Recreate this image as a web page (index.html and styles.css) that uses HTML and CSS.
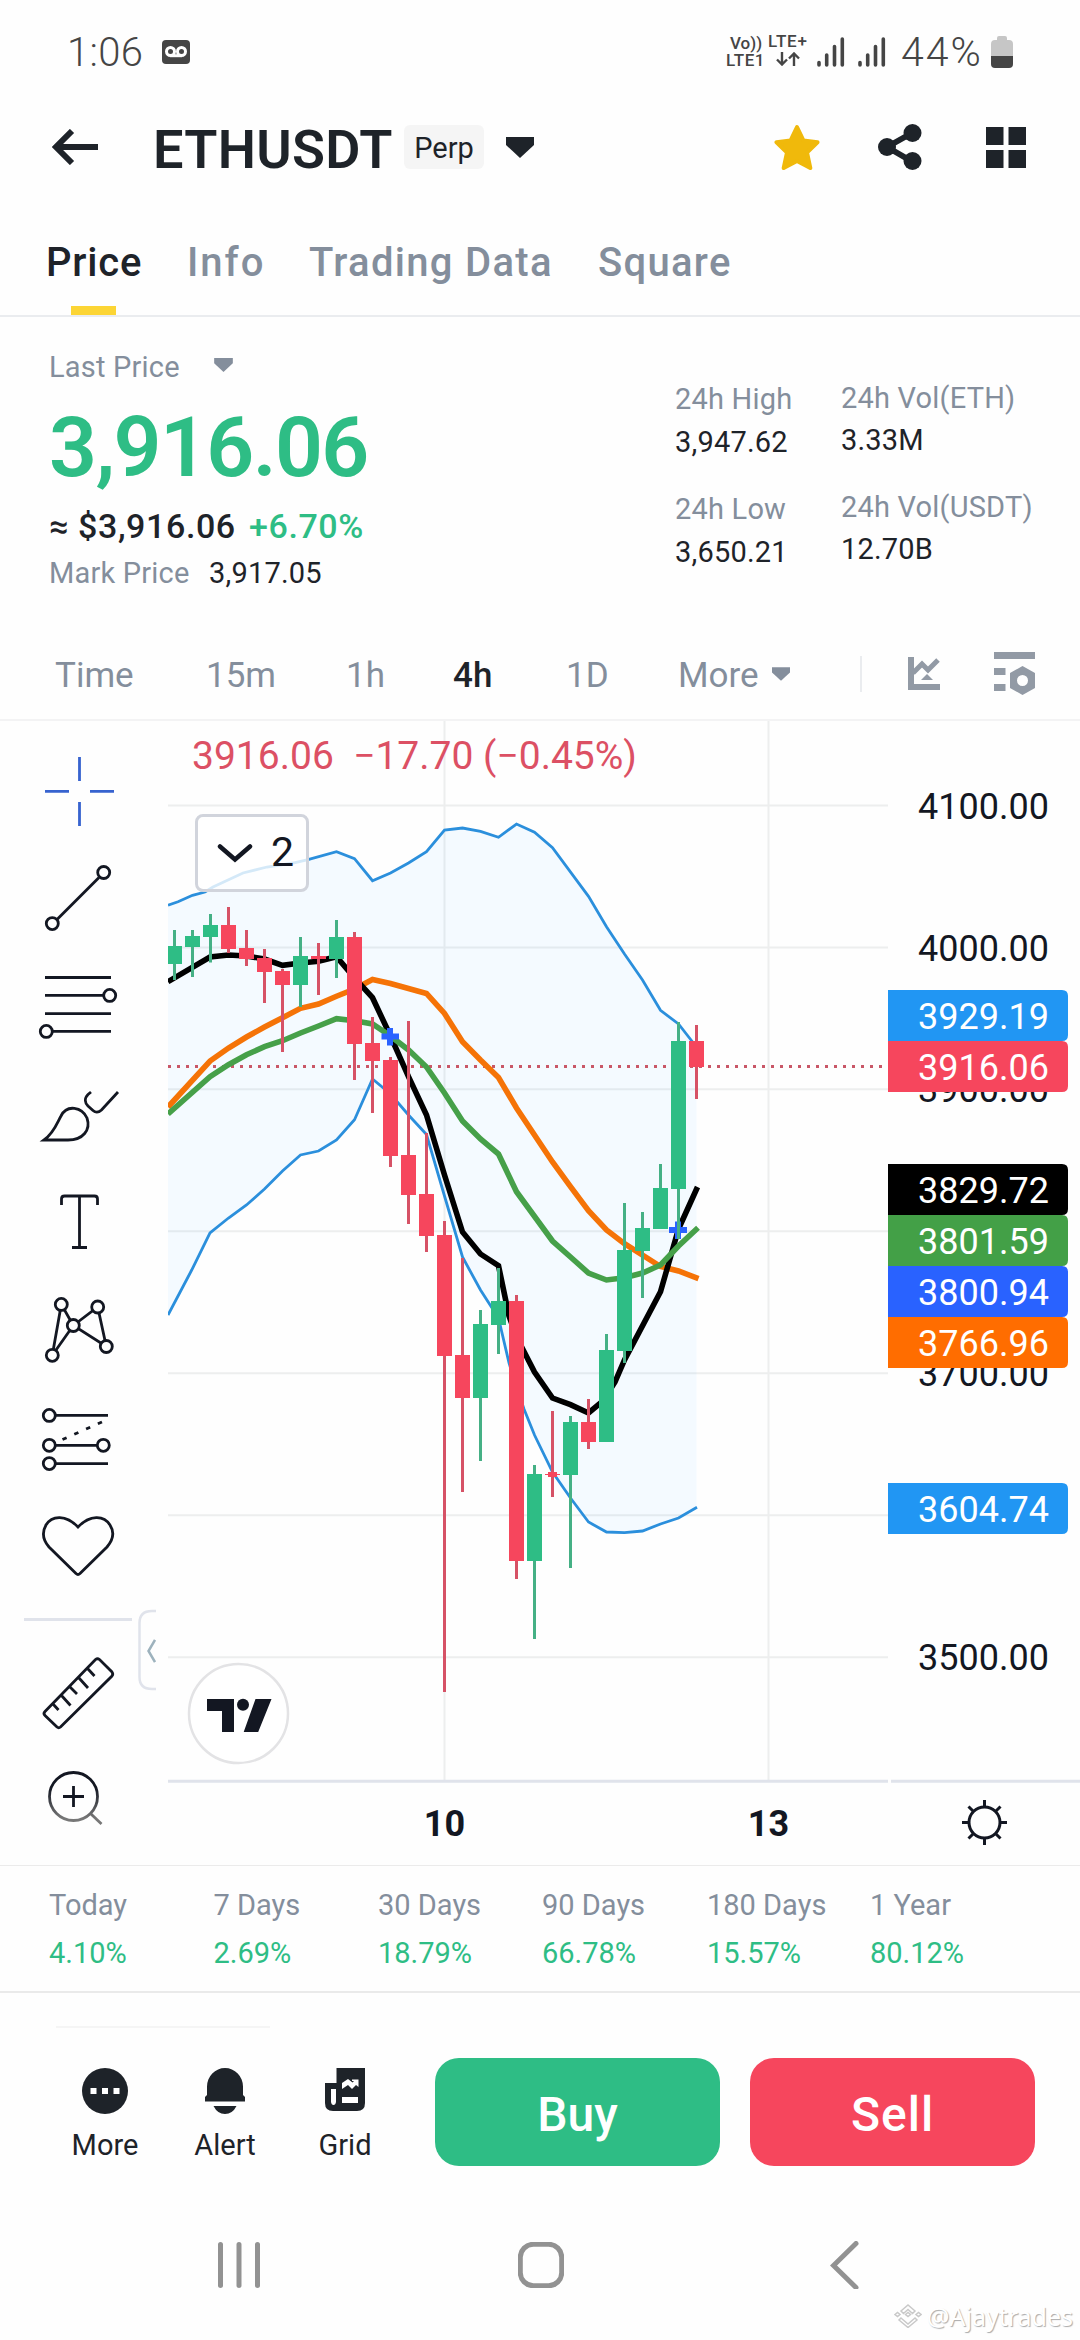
FILE: index.html
```html
<!DOCTYPE html>
<html lang="en">
<head>
    <meta charset="UTF-8">
    <meta name="viewport" content="width=device-width, initial-scale=1.0">
    <title>ETHUSDT Perp</title>
    <link rel="stylesheet" href="styles.css">
</head>
<body>
    <div class="status-bar">
        <span class="clock">1:06</span>
        <svg class="voicemail" width="28" height="24" viewBox="0 0 28 24">
            <rect width="28" height="24" rx="4" fill="#454545"/>
            <g fill="none" stroke="#fff" stroke-width="3">
                <circle cx="8.5" cy="11.5" r="4"/>
                <circle cx="19.5" cy="11.5" r="4"/>
                <path d="M8 15.7h12"/>
            </g>
        </svg>
        <div class="net volte"><span>Vo))</span><span>LTE1</span></div>
        <div class="net lte"><span>LTE+</span>
            <svg width="24" height="14" viewBox="0 0 24 14" fill="none" stroke="#454545" stroke-width="2.4">
                <path d="M6 0v12.5M1 7.5l5 5 5-5M18 14V1.5M13 6.500l5-5 5 5"/>
            </svg>
        </div>
        <svg class="signal" width="28" height="30" viewBox="0 0 28 30" stroke="#454545" stroke-width="3.600" stroke-linecap="round">
            <path d="M2 25.500v2.500M9.700 18v10M17.500 9.500v18.500M25.300 2v26"/>
        </svg>
        <svg class="signal second" width="28" height="30" viewBox="0 0 28 30" stroke="#454545" stroke-width="3.600" stroke-linecap="round">
            <path d="M2 25.500v2.500M9.700 18v10M17.500 9.500v18.500M25.300 2v26"/>
        </svg>
        <span class="battery-level">44%</span>
        <svg class="battery" width="22" height="32" viewBox="0 0 22 32">
            <path d="M6 2q0-2 2-2h6q2 0 2 2v2h2q4 0 4 4v13H0V8q0-4 4-4h2z" fill="#c6c6c6"/>
            <path d="M0 20h22v8q0 4-4 4H4q-4 0-4-4z" fill="#454545"/>
        </svg>
    </div>

    <div class="header">
        <svg class="back" width="46" height="36" viewBox="0 0 46 36" fill="none" stroke="#1e2329" stroke-width="6">
            <path d="M46 18H5M20 2L4 18l16 16"/>
        </svg>
        <h1>ETHUSDT</h1>
        <span class="badge">Perp</span>
        <svg class="caret" width="28" height="21" viewBox="0 0 28 21" fill="#1e2329"><path d="M0 0h28v8L14 21 0 8z"/></svg>
        <svg class="star" width="46" height="46" viewBox="0 0 46 46" fill="#f0b90b" stroke="#f0b90b" stroke-width="4" stroke-linejoin="round">
            <path d="M23 3l6.500 13.500 14 1.700-10.500 10.300 3.300 15.500L23 37 9.700 44 13 28.500 2.500 18.200l14-1.700z"/>
        </svg>
        <svg class="share" width="44" height="46" viewBox="0 0 44 46" fill="#1e2329">
            <path d="M9 23L34 9M9 23l25 14.500" stroke="#1e2329" stroke-width="6"/>
            <circle cx="9" cy="23" r="9"/><circle cx="34.500" cy="9" r="9"/><circle cx="34.500" cy="37" r="9"/>
        </svg>
        <svg class="widgets" width="40" height="41" viewBox="0 0 40 41" fill="#1e2329">
            <path d="M0 0h17.500v18H0zM22.500 0H40v18H22.500zM0 23h17.500v18H0zM22.500 23H40v18H22.500z"/>
        </svg>
    </div>

    <div class="tabs">
        <span class="tab active">Price</span>
        <span class="tab info">Info</span>
        <span class="tab trading">Trading Data</span>
        <span class="tab square">Square</span>
    </div>

    <div class="ticker">
        <div class="price">
            <div class="label">Last Price <svg width="19" height="14" viewBox="0 0 28 21" fill="#848e9c"><path d="M0 0h28v8L14 21 0 8z"/></svg></div>
            <div class="last">3,916.06</div>
            <div class="fiat"><span class="usd">≈ $3,916.06</span><span class="change">+6.70%</span></div>
            <div class="mark"><span class="label">Mark Price</span><span class="value">3,917.05</span></div>
        </div>
        <div class="day">
            <div class="label">24h High</div>
            <div class="value">3,947.62</div>
            <div class="label low">24h Low</div>
            <div class="value">3,650.21</div>
        </div>
        <div class="day volume">
            <div class="label">24h Vol(ETH)</div>
            <div class="value">3.33M</div>
            <div class="label low">24h Vol(USDT)</div>
            <div class="value">12.70B</div>
        </div>
    </div>

    <div class="intervals">
        <span>Time</span>
        <span>15m</span>
        <span>1h</span>
        <span class="active">4h</span>
        <span>1D</span>
        <span class="more">More</span>
        <svg width="18" height="14" viewBox="0 0 28 21" fill="#848e9c"><path d="M0 0h28v8L14 21 0 8z"/></svg>
        <i class="divider"></i>
        <svg width="32" height="33" viewBox="0 0 32 33" fill="#929aa5">
            <path d="M0 0h6v27h26v6H0z"/>
            <path d="M5 16l9-9 6 6L30 3" fill="none" stroke="#929aa5" stroke-width="5"/>
            <path d="M13 23l6-6 6 6z"/>
        </svg>
        <svg width="41" height="43" viewBox="0 0 41 43" fill="#929aa5">
            <path d="M0 0h41v7H0zM0 16h11.500v7H0zM0 32h11.500v7H0z"/>
            <path d="M28.500 14L41 21v15l-12.500 7L16 36V21zm0 9a5.500 5.500 0 1 0 0 11 5.500 5.500 0 0 0 0-11z" fill-rule="evenodd"/>
        </svg>
    </div>

    <div class="chart">
        <div class="toolbar">
            <svg class="tool crosshair"><path d="M45 51.400h24M90 51.400h24M79.500 17v24M79.500 62v24"/></svg>
            <svg class="tool"><path d="M57 71.500L99 29.500"/><circle cx="52.300" cy="75.600" r="6"/><circle cx="103.700" cy="24.500" r="6"/></svg>
            <svg class="tool"><path d="M45 21.500h66M45 39.400h58M45 57.600h66M53 75.400h58"/><circle cx="109.700" cy="39.400" r="6"/><circle cx="46.300" cy="75.400" r="6"/></svg>
            <svg class="tool"><path d="M44 76C54 69 57 59 61 52C67 40 82 43 87 54C91 66 83 76 68 76zM91 28L88 30.500C84 34.500 85 39 88 42L93 46.500Q97 50 101.500 46L118 28"/></svg>
            <svg class="tool"><path d="M61.500 33v-6q0-3 3-3h30q3 0 3 3v6M79.500 24v51.500M72 75.500h15"/></svg>
            <svg class="tool"><path d="M61.300 24.400L52.300 75.300 73.300 45.500zM73.300 45.500L97.700 27l8.600 39.500z"/><circle cx="61.300" cy="24.400" r="6"/><circle cx="97.700" cy="27" r="6"/><circle cx="73.300" cy="45.500" r="6"/><circle cx="52.300" cy="75.300" r="6"/><circle cx="106.300" cy="66.500" r="6"/></svg>
            <svg class="tool"><path d="M56 27.400h52M56 57.300h41M56 75.600h52"/><path d="M62.500 51.500L103 33.500" stroke-dasharray="4.500 8.400"/><circle cx="49.300" cy="27.400" r="6"/><circle cx="49.300" cy="57.300" r="6"/><circle cx="103.300" cy="57.300" r="6"/><circle cx="49.300" cy="75.600" r="6"/></svg>
            <svg class="tool"><path d="M78 31C66 18.500 52 19 46 29C42 36 43 44 49 51L76 77.500Q78 79.500 80 77.500L107 51C113 44 114.500 36 110 29C104 19 90 18.500 78 31z"/></svg>
            <hr>
            <svg class="tool"><path d="M45 71.400L95.500 19.500Q97.500 18 99.500 19.500L112 32Q113.500 34 112 36L60.500 87Q58.700 88.500 57 87L45 75.400Q43 73.400 45 71.400zM53 64l5.500 6M61.500 55.500l9 10M70 47l7 7M79 38l9 10M88 29l6.500 7"/></svg>
            <svg class="tool zoom-in">
                <defs><linearGradient id="fade" gradientUnits="userSpaceOnUse" x1="0" y1="40" x2="0" y2="78"><stop offset="0" stop-color="#131722"/><stop offset=".8" stop-color="#777"/></linearGradient></defs>
                <g stroke="url(#fade)"><circle cx="73.500" cy="48.500" r="24"/><path d="M91 66l10.500 10"/></g>
                <path d="M63 48.500h21M73.500 38v21"/>
            </svg>
        </div>
        <svg class="collapse" width="20" height="84" viewBox="0 0 20 84" fill="none">
            <path d="M20 2h-4Q3.500 2 3.500 14v54q0 12 12.500 12h4" stroke="#e0e3eb" stroke-width="2.500"/>
            <path d="M19 31l-6.500 11 6.500 11" stroke="#9db2bd" stroke-width="2.500"/>
        </svg>

        <svg class="plot" width="912" height="1144" viewBox="168 721 912 1144">
            <!-- bollinger fill -->
            <path fill="#f4faff" d="M168 905.300L178 901.700 192.500 895.300 205 892 213 887 243 873 267 867 293 863 308 859.700 336.500 851.700 354.500 858.700 372.500 880.700 390.500 873 408.500 863 426.500 851.700 444.500 830 462.500 828 480.500 831.300 498.500 837.300 516.500 824 534.500 832.300 552.500 847.700 588.500 896.300 606.500 926.700 624.500 954 642.500 980 660.500 1010.300 678.500 1024 696.500 1047V1507L678.500 1518 660.500 1524 642.500 1531 624.500 1532.700 606.500 1532 588.500 1522 570.500 1498 552.500 1472 534.500 1435 524 1409 516.500 1387 509 1363 498.500 1318 480.500 1290 462.500 1257 444.500 1196 426.500 1134.500 408.500 1115 390.500 1094 372.500 1079 354.500 1119.700 336.500 1140 318.500 1151 300.500 1155 282.500 1171 264.500 1189 246.500 1205 228.500 1218 210 1233 191.700 1270 168 1315z"/>
            <!-- grid -->
            <path stroke="#2a2e39" stroke-opacity=".08" stroke-width="2" d="M168 805.500h720M168 947.500h720M168 1089.300h720M168 1231.300h720M168 1373.300h720M168 1515.300h720M168 1657.300h720M444.500 721v1060M768.500 721v1060"/>
            <path stroke="#e0e3eb" stroke-width="3" d="M168 1781.300h720M891 1781.300h189"/>
            <path stroke="#c95767" stroke-width="3" stroke-dasharray="3 6" d="M168 1066.500h720"/>
            <!-- bands -->
            <g fill="none" stroke="#2b8fdc" stroke-width="2.800">
                <path d="M168 905.300L178 901.700 192.500 895.300 205 892 213 887 243 873 267 867 293 863 308 859.700 336.500 851.700 354.500 858.700 372.500 880.700 390.500 873 408.500 863 426.500 851.700 444.500 830 462.500 828 480.500 831.300 498.500 837.300 516.500 824 534.500 832.300 552.500 847.700 588.500 896.300 606.500 926.700 624.500 954 642.500 980 660.500 1010.300 678.500 1024 696.500 1047"/>
                <path d="M168 1315L191.700 1270 210 1233 228.500 1218 246.500 1205 264.500 1189 282.500 1171 300.500 1155 318.500 1151 336.500 1140 354.500 1119.700 372.500 1079 390.500 1094 408.500 1115 426.500 1134.500 444.500 1196 462.500 1257 480.500 1290 498.500 1318 509 1363 516.500 1387 524 1409 534.500 1435 552.500 1472 570.500 1498 588.500 1522 606.500 1532 624.500 1532.700 642.500 1531 660.500 1524 678.500 1518 697 1507.300"/>
            </g>
            <!-- moving averages -->
            <g fill="none" stroke-width="5.600">
                <path stroke="#f57307" d="M168 1107L210 1061 228.500 1048 246.500 1037 264.500 1027 282.500 1017.700 300.500 1008.300 318.500 1004 336.500 996.300 354.500 989 372.500 979.500 390.500 983.500 426.500 993.500 444.500 1013.500 462.500 1041.700 480.500 1060 498.500 1077.500 516.500 1108 534.500 1135 552.500 1162 570.500 1186.700 588.500 1210.700 606.500 1230 624.500 1243.700 660.500 1266.500 678.500 1271 698.500 1278.600"/>
                <path stroke="#000" d="M168 981.700L210 957 228.500 955 246.500 956 264.500 959 282.500 965.300 300.500 963 318.500 961.300 336.500 956.700 354.500 978 372.500 997.700 390.500 1036 408.500 1076.700 426.500 1115 444.500 1175 462.500 1232 480.500 1254 498.500 1265.700 509 1316 516.500 1337 534.500 1372 552.500 1398 570.500 1404.700 588.500 1413 603 1401 615 1382 624.500 1360 660.500 1291.700 678.500 1229 697.500 1187"/>
                <path stroke="#46a049" d="M168 1114L210 1076.700 228.500 1064.700 246.500 1054.700 264.500 1046.700 282.500 1040.700 300.500 1033 318.500 1026 336.500 1018.700 354.500 1020.700 372.500 1024 390.500 1036 408.500 1050 426.500 1067 444.500 1093 462.500 1121 480.500 1139 498.500 1154 516.500 1191.700 552.500 1241 570.500 1257 588.500 1273 606.500 1280 624.500 1277.700 642.500 1273 660.500 1265 678.500 1246 698 1227.700"/>
            </g>
            <path stroke="#2962ff" stroke-width="6" d="M381.500 1036.500h17.500M390 1028v17.500M669 1230h18M678 1221.500v17.500"/>
            <!-- candle wicks -->
            <g stroke-width="3">
                <path stroke="#45b085" d="M174.500 930V980M192.500 930V977M210.500 914V962.500M300.500 937V1007M336.500 920V978M480.500 1310V1461M498.500 1268V1354M534.500 1465V1639M570.500 1416V1568M606.500 1334V1400M624.500 1203V1363M642.500 1212V1298M660.500 1164V1229M678.500 1022V1239"/>
                <path stroke="#d65266" d="M228.500 907V953M246.500 930V966M264.500 949V1003M282.500 969V1052M318.500 943V995M354.500 932V1080M372.500 1017V1113M390.500 1057V1167M408.500 1021V1224M426.500 1133V1252M444.500 1221V1692M462.500 1258V1492M516.500 1295V1579M552.500 1411V1497M588.500 1399V1449M696.500 1025V1099"/>
            </g>
            <!-- candle bodies -->
            <g stroke-width="15">
                <path stroke="#2ebd85" d="M174.500 946V964M192.500 936V947M210.500 925V937M300.500 956V985M336.500 937V959M480.500 1324V1398M498.500 1301V1325M534.500 1474V1561M570.500 1422V1475M606.500 1350V1442M624.500 1250V1351M642.500 1228V1251M660.500 1188V1229M678.500 1041V1189"/>
                <path stroke="#f6465d" d="M228.500 925V949M246.500 948V959M264.500 958V972M282.500 971V985M318.500 956V959M354.500 937V1044M372.500 1043V1061M390.500 1060V1156M408.500 1155V1195M426.500 1194V1236M444.500 1235V1356M462.500 1355V1398M516.500 1301V1561M552.500 1474V1475M588.500 1422V1442M696.500 1041V1067"/>
                <path stroke="#f6465d" stroke-width="9" d="M552.500 1472V1477"/>
            </g>
            <!-- price scale -->
            <g class="scale">
                <text x="918" y="819">4100.00</text>
                <text x="918" y="961">4000.00</text>
                <text x="918" y="1102">3900.00</text>
                <text x="918" y="1386">3700.00</text>
                <text x="918" y="1670">3500.00</text>
            </g>
            <g class="scale tags">
                <path fill="#2196f3" d="M888 990h174q6 0 6 6v39q0 6-6 6H888z"/><text x="918" y="1028.500">3929.19</text>
                <path fill="#f6465d" d="M888 1041h174q6 0 6 6v39q0 6-6 6H888z"/><text x="918" y="1079.500">3916.06</text>
                <path fill="#000" d="M888 1164h174q6 0 6 6v39q0 6-6 6H888z"/><text x="918" y="1202.500">3829.72</text>
                <path fill="#43a047" d="M888 1215h174q6 0 6 6v39q0 6-6 6H888z"/><text x="918" y="1253.500">3801.59</text>
                <path fill="#2962ff" d="M888 1266h174q6 0 6 6v39q0 6-6 6H888z"/><text x="918" y="1304.500">3800.94</text>
                <path fill="#ff6d00" d="M888 1317h174q6 0 6 6v39q0 6-6 6H888z"/><text x="918" y="1355.500">3766.96</text>
                <path fill="#2196f3" d="M888 1483h174q6 0 6 6v39q0 6-6 6H888z"/><text x="918" y="1521.500">3604.74</text>
            </g>
            <!-- time scale -->
            <g class="scale dates">
                <text x="444.500" y="1836">10</text>
                <text x="768.500" y="1836">13</text>
            </g>
            <g fill="none" stroke="#131722" stroke-width="3" transform="translate(984.500 1822.500)">
                <circle r="15.500"/>
                <path d="M0-16v-6.500M0 16v6.500M-16 0h-6.500M16 0h6.500M-11-11l-5-5M11-11l5-5M-11 11l-5 5M11 11l5 5"/>
            </g>
            <!-- tradingview mark -->
            <circle cx="238.500" cy="1713.500" r="49.500" fill="#fff" stroke="#e3e3e5" stroke-width="2.500"/>
            <path fill="#131722" d="M207 1699h27v33h-12v-21h-15zM255.500 1699h16l-13.300 33h-14.500z"/>
            <circle cx="243" cy="1704.800" r="6" fill="#131722"/>
        </svg>

        <div class="legend">3916.06 &nbsp;−17.70 (−0.45%)</div>
        <div class="toggle">
            <svg width="36" height="20" viewBox="0 0 36 20" fill="none" stroke="#131722" stroke-width="4.500" stroke-linecap="round"><path d="M3 3.500l15 13 15-13"/></svg>
            <span>2</span>
        </div>
    </div>

    <div class="periods">
        <div><span>Today</span><b>4.10%</b></div>
        <div><span>7 Days</span><b>2.69%</b></div>
        <div><span>30 Days</span><b>18.79%</b></div>
        <div><span>90 Days</span><b>66.78%</b></div>
        <div><span>180 Days</span><b>15.57%</b></div>
        <div><span>1 Year</span><b>80.12%</b></div>
    </div>

    <hr class="hairline">

    <div class="actions">
        <div class="action">
            <svg width="46" height="46" viewBox="0 0 46 46"><circle cx="23" cy="23" r="23" fill="#1e2329"/><path fill="#fff" d="M8.500 20h6v6h-6zM20 20h6v6h-6zM31.500 20h6v6h-6z"/></svg>
            <span>More</span>
        </div>
        <div class="action">
            <svg width="46" height="46" viewBox="0 0 46 46" fill="#1e2329"><path d="M5 18.500a18 18.500 0 0 1 36 0V27l2 2v4.500H3V29l2-2zM11.500 38h23q-4 8-11.500 8t-11.500-8z"/></svg>
            <span>Alert</span>
        </div>
        <div class="action">
            <svg width="46" height="46" viewBox="0 0 46 46"><path fill="#1e2329" d="M14.500 0H43v35q0 8-8 8H11q-8 0-8-8V15h11.500z"/><path fill="#fff" d="M9 21h5v13q-.5 3-2.500 3T9 34zM20 29h16v6H20zM20 21v-6l6-4 4.500 3.500L32 13h-2v-1.500h6.500V19L34 17l-4 4-4-4z"/></svg>
            <span>Grid</span>
        </div>
        <button class="buy">Buy</button>
        <button class="sell">Sell</button>
    </div>

    <div class="nav">
        <svg width="44" height="46" viewBox="0 0 44 46"><path d="M3.500 2.500v41M22 2.500v41M40.500 2.500v41"/></svg>
        <svg width="46" height="46" viewBox="0 0 46 46"><rect x="2.300" y="2.300" width="41.400" height="41.400" rx="13"/></svg>
        <svg width="30" height="48" viewBox="0 0 30 48"><path d="M26 2.500L3.500 24.500 26 46.500"/></svg>
        <div class="watermark">
            <svg width="28" height="24" viewBox="0 0 28 24" fill="none" stroke="#c9c9c9" stroke-width="1.500"><path d="M7 7l7-6 7 6-2.500 2.500-4.500-4-4.500 4zM1 10.500l2.500-2 2.500 2-2.500 2zM22 10.500l2.500-2 2.500 2-2.500 2zM11.500 10.500l2.500-2 2.500 2-2.500 2zM7 14l7 6 7-6 2 2-9 7.500L5 16z"/></svg>
            <span>@Ajaytrades</span>
        </div>
    </div>
</body>
</html>
```
FILE: styles.css
```css
* {
    box-sizing: border-box;
}
body {
    margin: 0;
    width: 1080px;
    height: 2340px;
    overflow: hidden;
    background: #fefefe;
    color: #1e2329;
    font-family: Roboto, "Noto Sans", sans-serif;
    display: flex;
    flex-direction: column;
}
svg {
    display: block;
    flex: none;
}

/* status bar */
.status-bar {
    display: flex;
    align-items: center;
    height: 104px;
    padding: 0 67px 0 67px;
    color: #454545;
}
.clock {
    width: 95px;
    font-size: 40px;
    font-weight: 300;
    letter-spacing: 0.3px;
}
.net {
    display: flex;
    flex-direction: column;
    font-size: 17px;
    font-weight: 500;
    line-height: 17px;
    height: 34px;
    white-space: nowrap;
}
.volte {
    margin-left: auto;
    width: 42px;
}
.volte span:first-child {
    padding-left: 4px;
}
.volte span:last-child {
    letter-spacing: 0.6px;
}
.lte {
    width: 49px;
    margin-top: -4px;
    letter-spacing: 0.8px;
}
.lte svg {
    margin: 2px 0 0 8px;
}
.second {
    margin-left: 13px;
}
.battery-level {
    margin-left: 15px;
    width: 90px;
    font-size: 41px;
    font-weight: 300;
    letter-spacing: 2px;
    white-space: nowrap;
}

/* header */
.header {
    display: flex;
    align-items: center;
    height: 86px;
    padding-left: 52px;
}
.header h1 {
    margin: 4px 0 0 55px;
    width: 251px;
    font-size: 54px;
    font-weight: 600;
    letter-spacing: 0.3px;
}
.badge {
    width: 80px;
    height: 44px;
    line-height: 46px;
    border-radius: 6px;
    background: #f5f5f5;
    font-size: 29px;
    text-align: center;
}
.caret {
    margin-left: 22px;
}
.star {
    margin-left: 240px;
}
.share {
    margin-left: 58px;
}
.widgets {
    margin-left: 64px;
}

/* tabs */
.tabs {
    display: grid;
    grid-template-columns: 141px 122px 289px auto;
    height: 127px;
    padding-left: 46px;
    border-bottom: 2px solid #eaecef;
    line-height: 145px;
    font-size: 40px;
    font-weight: 500;
    letter-spacing: 1.3px;
    color: #848e9c;
}
.tab.active {
    position: relative;
    letter-spacing: 0.8px;
    color: #1e2329;
}
.tab.active::after {
    content: "";
    position: absolute;
    left: 25px;
    top: 116px;
    width: 45px;
    height: 9px;
    background: #fcd535;
}
.tab.info {
    letter-spacing: 2px;
}

/* ticker */
.ticker {
    display: grid;
    grid-template-columns: 626px 166px auto;
    height: 303px;
    padding-left: 49px;
    font-size: 29px;
    line-height: 34px;
    letter-spacing: 0.2px;
}
.label {
    color: #848e9c;
}
.price {
    padding-top: 33px;
}
.price > .label {
    display: flex;
    gap: 34px;
    height: 34px;
}
.price > .label svg {
    margin-top: 8px;
}
.last {
    height: 96px;
    margin-top: 16px;
    line-height: 96px;
    font-size: 84px;
    font-weight: 600;
    letter-spacing: -1.6px;
    color: #2ebd85;
}
.fiat {
    display: flex;
    height: 42px;
    margin-top: 9px;
    line-height: 42px;
    font-size: 34px;
    font-weight: 500;
    letter-spacing: 0.6px;
}
.usd {
    width: 200px;
}
.change {
    color: #2ebd85;
}
.mark {
    display: flex;
    margin-top: 9px;
}
.mark .label {
    width: 160px;
}
.day {
    padding-top: 65px;
}
.day .value {
    margin-top: 9px;
}
.volume {
    padding-top: 64px;
}
.volume .value {
    margin-top: 8px;
}
.low {
    margin-top: 33px;
}

/* intervals */
.intervals {
    display: grid;
    grid-template-columns: 151px 140px 107px 113px 112px 94px 88px 48px 86px auto;
    align-items: center;
    height: 99px;
    padding: 8px 0 0 55px;
    font-size: 35px;
    color: #848e9c;
}
.intervals span {
    padding-top: 4px;
}
.intervals .active {
    color: #1e2329;
    font-weight: 500;
}
.divider {
    width: 2px;
    height: 36px;
    background: #eaecef;
}

/* chart */
.chart {
    position: relative;
    display: flex;
    height: 1147px;
    border-top: 2px solid #f3f3f4;
    border-bottom: 1px solid #ebebeb;
}
.toolbar {
    width: 168px;
    padding-top: 19px;
}
.tool {
    width: 168px;
    height: 108px;
    fill: none;
    stroke: #131722;
    stroke-width: 2.8px;
}
.tool circle {
    fill: #fefefe;
}
.crosshair {
    stroke: #3763cf;
}
.toolbar hr {
    width: 108px;
    height: 3px;
    margin: 14px 0 19px 24px;
    border: 0;
    background: #e0e3eb;
}
.collapse {
    position: absolute;
    left: 136px;
    top: 888px;
}
.scale text {
    font-size: 36px;
    fill: #131722;
}
.scale.tags text {
    fill: #fff;
}
.scale.dates text {
    font-weight: 700;
    text-anchor: middle;
}
.legend {
    position: absolute;
    left: 192px;
    top: 12px;
    font-size: 39px;
    line-height: 46px;
    color: #dc5064;
}
.toggle {
    position: absolute;
    left: 195px;
    top: 93px;
    display: flex;
    align-items: center;
    gap: 18px;
    width: 114px;
    height: 78px;
    padding-left: 19px;
    border: 3px solid #d1d4dc;
    border-radius: 8px;
    background: rgba(255, 255, 255, 0.8);
    font-size: 41px;
    line-height: 70px;
    color: #131722;
}
.toggle span {
    padding-bottom: 3px;
}

/* performance */
.periods {
    display: grid;
    grid-template-columns: 164.500px 164.500px 164px 165px 163px auto;
    height: 127px;
    padding: 21px 0 0 49px;
    border-bottom: 2px solid #eaeaea;
    font-size: 29px;
    color: #848e9c;
}
.periods span {
    display: block;
    height: 48px;
    line-height: 36px;
}
.periods b {
    display: block;
    line-height: 36px;
    font-weight: 400;
    color: #2ebd85;
}
.hairline {
    width: 214px;
    height: 2px;
    margin: 33px 0 0 56px;
    border: 0;
    background: #f5f5f5;
}

/* bottom actions */
.actions {
    display: flex;
    align-items: flex-start;
    height: 138px;
    padding: 30px 0 0 45px;
}
.action {
    display: flex;
    flex-direction: column;
    align-items: center;
    gap: 14px;
    width: 120px;
    padding-top: 10px;
    font-size: 29px;
}
.actions button {
    width: 285px;
    height: 108px;
    padding: 5px 0 0;
    border: 0;
    border-radius: 24px;
    color: #fff;
    font-family: inherit;
    font-size: 48px;
    font-weight: 500;
}
.buy {
    margin: 0 30px;
    background: #2ebd85;
}
.sell {
    background: #f6465d;
    letter-spacing: 1px;
}

/* system navigation */
.nav {
    position: relative;
    display: flex;
    align-items: center;
    height: 172px;
    padding: 26px 0 0 217px;
    fill: none;
    stroke: #929292;
    stroke-width: 5px;
    stroke-linecap: round;
}
.nav svg:nth-child(2) {
    margin-left: 257px;
}
.nav svg:nth-child(3) {
    margin-left: 266px;
}
.watermark {
    position: absolute;
    right: 7px;
    bottom: 6px;
    display: flex;
    align-items: center;
    gap: 5px;
    font-family: "Noto Sans", sans-serif;
    font-size: 25px;
    line-height: 32px;
    color: #fff;
    text-shadow: 1px 1px 1px #aaa;
}
.watermark svg {
    stroke-width: 1.5px;
}
```
